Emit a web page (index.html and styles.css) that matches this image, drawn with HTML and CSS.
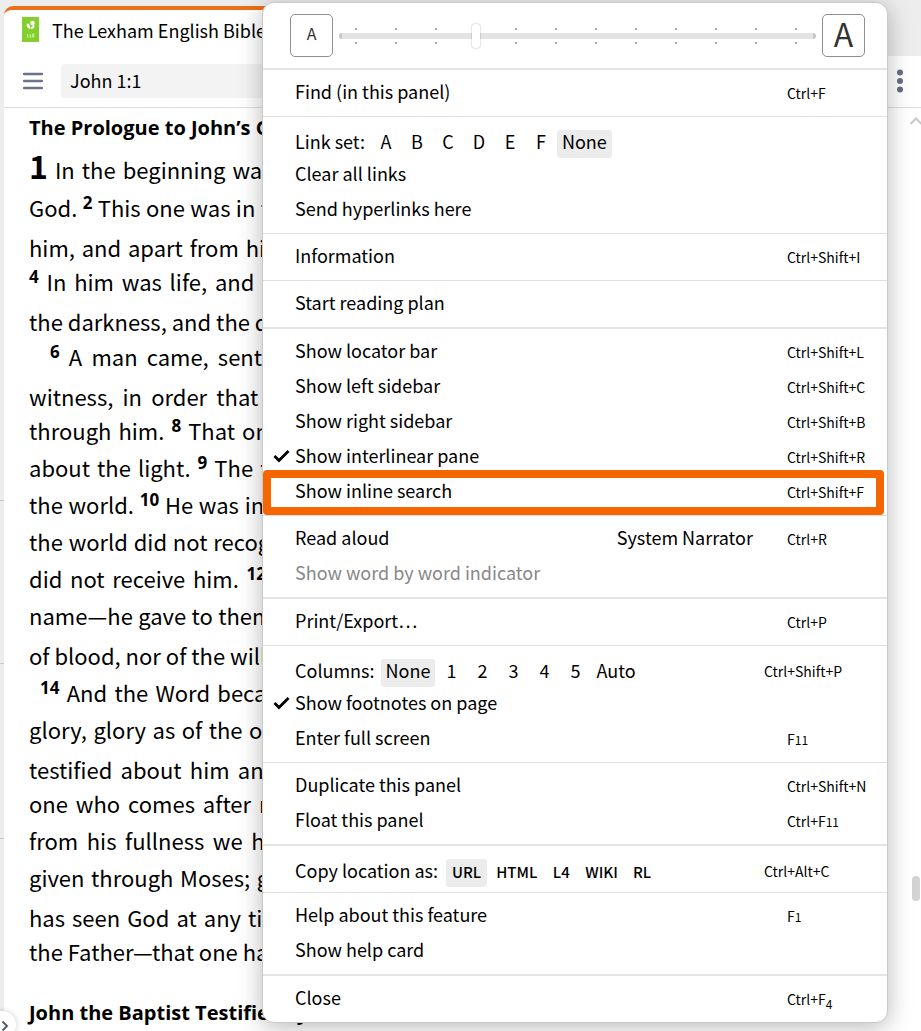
FILE: index.html
```html
<!DOCTYPE html>
<html lang="en">
<head>
    <meta charset="utf-8">
    <meta name="viewport" content="width=device-width, initial-scale=1">
    <title>The Lexham English Bible</title>
    <link rel="stylesheet" href="styles.css">
</head>
<body>
<div class="app">
    <div class="gutter">
        <span class="mark mark-1"></span>
        <span class="mark mark-2"></span>
        <span class="mark mark-3"></span>
        <button class="expand" type="button" aria-label="Expand">
            <svg width="8" height="12" viewBox="0 0 8 12"><path d="M1.5 1.5 6 6l-4.500 4.500" fill="none" stroke="#555c6b" stroke-width="2"/></svg>
        </button>
    </div>

    <main class="panel">
        <div class="tab">
            <svg width="17" height="25" viewBox="0 0 17 25">
                <rect width="17" height="25" fill="#84cf2c"/>
                <circle cx="10.500" cy="6" r="2.300" fill="#fff"/>
                <path d="M5 6.500c2 0 3.500 2 3.500 5.500C6 11.500 4 9.500 5 6.500zM9 12c0-2 1-3.500 3.500-4 .3 2.500-1 4-3.500 4z" fill="#fff"/>
                <path d="M5.500 17v3h1.500M8 17v3h1.500M8 18.500h1M10.500 17v3h1.500V17z" fill="none" stroke="#c9efa0"/>
            </svg>
            <span>The Lexham English Bible</span>
        </div>
        <div class="toolbar">
            <button class="icon-btn" type="button" aria-label="Panel list">
                <svg width="20" height="18" viewBox="0 0 20 18"><path d="M1 2h18M1 9h18M1 16h18" stroke="#6a7389" stroke-width="2.400" stroke-linecap="round"/></svg>
            </button>
            <input class="reference" type="text" value="John 1:1" aria-label="Reference">
            <button class="icon-btn" type="button" aria-label="Panel menu">
                <svg width="6" height="24" viewBox="0 0 6 24" fill="#666e84"><circle cx="3" cy="3.500" r="3"/><circle cx="3" cy="12" r="3"/><circle cx="3" cy="20.500" r="3"/></svg>
            </button>
        </div>

        <article class="text">
            <h2>The Prologue to John’s Gospel</h2>
            <div class="para">
                <p class="first"><b class="chapter">1</b> In the beginning was the Word, and the Word was with God, and the Word was</p>
                <p>God. <sup>2</sup> This one was in the beginning with God. <sup>3</sup> All things came into being through</p>
                <p class="low">him, and apart from him not one thing came into being that has come into being.</p>
                <p><sup>4</sup> In him was life, and the life was the light of humanity. <sup>5</sup> And the light shines in</p>
                <p class="low end">the darkness, and the darkness did not overcome it.</p>
            </div>
            <div class="para">
                <p class="indent"><sup>6</sup> A man came, sent from God, whose name was John. <sup>7</sup> This one came for a</p>
                <p class="low">witness, in order that he could testify about the light, so that all would believe</p>
                <p>through him. <sup>8</sup> That one was not the light, but came in order that he could testify</p>
                <p>about the light. <sup>9</sup> The true light, who gives light to every person, was coming into</p>
                <p>the world. <sup>10</sup> He was in the world, and the world came into being through him, and</p>
                <p>the world did not recognize him. <sup>11</sup> He came to his own things, and his own people</p>
                <p>did not receive him. <sup>12</sup> But as many as received him—to those who believe in his</p>
                <p>name—he gave to them authority to become children of God, <sup>13</sup> who were born not</p>
                <p class="low end">of blood, nor of the will of the flesh, nor of the will of a husband, but of God.</p>
            </div>
            <div class="para">
                <p class="indent-2"><sup>14</sup> And the Word became flesh and took up residence among us, and we saw his</p>
                <p>glory, glory as of the one and only from the Father, full of grace and truth. <sup>15</sup> John</p>
                <p class="low">testified about him and cried out, saying, “This is he about whom I said, ‘The</p>
                <p>one who comes after me is ahead of me, because he existed before me.’ <sup>16</sup> For</p>
                <p>from his fullness we have all received, and grace after grace. <sup>17</sup> For the law was</p>
                <p>given through Moses; grace and truth came about through Jesus Christ. <sup>18</sup> No one</p>
                <p class="low">has seen God at any time; the one and only, God, the one who is in the bosom of</p>
                <p class="end">the Father—that one has made him known.</p>
            </div>
            <h2 class="next">John the Baptist Testifies by</h2>
        </article>

        <div class="scrollbar">
            <svg width="14" height="8" viewBox="0 0 14 8"><path d="M1.500 7 7 1.500 12.500 7" fill="none" stroke="#c8c8c8" stroke-width="2"/></svg>
            <span class="thumb"></span>
        </div>
    </main>

    <div class="menu">
        <div class="size-row">
            <button class="size-btn" type="button" aria-label="Smaller text">A</button>
            <div class="slider">
                <input type="range" min="0" max="100" value="28" aria-label="Text size">
            </div>
            <button class="size-btn large" type="button" aria-label="Larger text">A</button>
        </div>
        <div class="group">
            <button class="item" type="button"><span>Find (in this panel)</span><kbd>Ctrl+F</kbd></button>
        </div>
        <div class="group">
            <div class="choices">
                <span class="label">Link set:</span>
                <button class="chip" type="button">A</button>
                <button class="chip" type="button">B</button>
                <button class="chip" type="button">C</button>
                <button class="chip" type="button">D</button>
                <button class="chip" type="button">E</button>
                <button class="chip" type="button">F</button>
                <button class="chip active" type="button">None</button>
            </div>
            <button class="item" type="button"><span>Clear all links</span></button>
            <button class="item" type="button"><span>Send hyperlinks here</span></button>
        </div>
        <div class="group">
            <button class="item" type="button"><span>Information</span><kbd>Ctrl+Shift+I</kbd></button>
        </div>
        <div class="group strong">
            <button class="item" type="button"><span>Start reading plan</span></button>
        </div>
        <div class="group">
            <button class="item" type="button"><span>Show locator bar</span><kbd>Ctrl+Shift+L</kbd></button>
            <button class="item" type="button"><span>Show left sidebar</span><kbd>Ctrl+Shift+C</kbd></button>
            <button class="item" type="button"><span>Show right sidebar</span><kbd>Ctrl+Shift+B</kbd></button>
            <button class="item" type="button">
                <svg class="check" width="17" height="14" viewBox="0 0 17 14"><path d="M1.500 7 6 11.500 15.500 2" fill="none" stroke="#000" stroke-width="2.800"/></svg>
                <span>Show interlinear pane</span><kbd>Ctrl+Shift+R</kbd>
            </button>
            <button class="item highlighted" type="button"><span>Show inline search</span><kbd>Ctrl+Shift+F</kbd></button>
        </div>
        <div class="group strong">
            <button class="item" type="button"><span>Read aloud</span><span class="voice">System Narrator</span><kbd>Ctrl+R</kbd></button>
            <button class="item" type="button" disabled><span>Show word by word indicator</span></button>
        </div>
        <div class="group">
            <button class="item" type="button"><span>Print/Export…</span><kbd>Ctrl+P</kbd></button>
        </div>
        <div class="group">
            <div class="choices">
                <span class="label">Columns:</span>
                <button class="chip active" type="button">None</button>
                <button class="chip" type="button">1</button>
                <button class="chip" type="button">2</button>
                <button class="chip" type="button">3</button>
                <button class="chip" type="button">4</button>
                <button class="chip" type="button">5</button>
                <button class="chip" type="button">Auto</button>
                <kbd>Ctrl+Shift+P</kbd>
            </div>
            <button class="item" type="button">
                <svg class="check" width="17" height="14" viewBox="0 0 17 14"><path d="M1.500 7 6 11.500 15.500 2" fill="none" stroke="#000" stroke-width="2.800"/></svg>
                <span>Show footnotes on page</span>
            </button>
            <button class="item" type="button"><span>Enter full screen</span><kbd>F<small>11</small></kbd></button>
        </div>
        <div class="group strong">
            <button class="item" type="button"><span>Duplicate this panel</span><kbd>Ctrl+Shift+N</kbd></button>
            <button class="item" type="button"><span>Float this panel</span><kbd>Ctrl+F<small>11</small></kbd></button>
        </div>
        <div class="group">
            <div class="choices formats">
                <span class="label">Copy location as:</span>
                <button class="chip active" type="button">URL</button>
                <button class="chip" type="button">HTML</button>
                <button class="chip" type="button">L4</button>
                <button class="chip" type="button">WIKI</button>
                <button class="chip" type="button">RL</button>
                <kbd>Ctrl+Alt+C</kbd>
            </div>
        </div>
        <div class="group strong">
            <button class="item" type="button"><span>Help about this feature</span><kbd>F<small>1</small></kbd></button>
            <button class="item" type="button"><span>Show help card</span></button>
        </div>
        <div class="group">
            <button class="item" type="button"><span>Close</span><kbd>Ctrl+F<small class="drop">4</small></kbd></button>
        </div>
    </div>
</div>
</body>
</html>
```
FILE: styles.css
```css
* {
    box-sizing: border-box;
}

body {
    margin: 0;
    background-color: #ededed;
    color: #000;
    font-family: "Noto Sans CJK SC", "Noto Sans", sans-serif;
    font-size: 18px;
}

button, input, kbd {
    font: inherit;
    color: inherit;
}

button {
    margin: 0;
    padding: 0;
    border: none;
    background: none;
    text-align: left;
}

.app {
    position: relative;
    display: flex;
    height: 100vh;
    padding-top: 6px;
    overflow: hidden;
}

/* left edge */
.gutter {
    flex: 0 0 4px;
}

.mark {
    position: absolute;
    left: 0;
    width: 4px;
    height: 1px;
    background: #c8c8c8;
}

.mark-1 { top: 500px; }
.mark-2 { top: 663px; }
.mark-3 { top: 838px; }

.expand {
    position: absolute;
    left: -12px;
    bottom: -8px;
    z-index: 1;
    width: 28px;
    height: 28px;
    padding: 1px 0 0 13px;
    border-radius: 50%;
    background: #fff;
    box-shadow: 0 0 6px rgba(0, 0, 0, 0.2);
    line-height: 0;
}

/* bible panel */
.panel {
    position: relative;
    flex: 1;
    min-width: 0;
    overflow: hidden;
}

.tab {
    display: flex;
    align-items: center;
    gap: 13px;
    width: 60%;
    height: 50px;
    padding: 0 18px 7px;
    border-top: 4px solid #ec7019;
    border-radius: 9px 9px 0 0;
    background: #fff;
}

.toolbar {
    display: flex;
    align-items: center;
    justify-content: space-between;
    height: 52px;
    padding: 0 18px 1px 19px;
    border-bottom: 1px solid #ddd;
    background: #fff;
}

.icon-btn {
    line-height: 0;
}

.reference {
    flex: 1;
    min-width: 0;
    height: 34px;
    margin: 0 200px 0 18px;
    padding: 0 9px 2px;
    border: none;
    border-radius: 4px;
    background: #f3f3f3;
}

.text {
    height: 100%;
    padding: 3px 40px 0 25px;
    background: #fff;
}

.text h2 {
    margin: 0 0 6px;
    font-family: "Open Sans", sans-serif;
    font-size: 20px;
    line-height: 34px;
    white-space: nowrap;
}

.text p {
    height: 37px;
    margin: 0;
    font-size: 22px;
    line-height: 37px;
    text-align-last: justify;
    white-space: nowrap;
}

.text .first {
    height: 38px;
}

.para + .para {
    padding-top: 1px;
}

.para:nth-of-type(3) {
    padding-top: 3px;
}

.text .low {
    padding-top: 3px;
}

.text .end {
    text-align-last: left;
}

.text .indent {
    padding-left: 21px;
}

.text .indent-2 {
    padding-left: 11px;
}

.text .next {
    margin-top: 26px;
}

.chapter {
    font-size: 32px;
    line-height: 0;
}

sup {
    font-family: "Open Sans", sans-serif;
    font-size: 17px;
    font-weight: bold;
    line-height: 0;
}

.scrollbar {
    position: absolute;
    top: 111px;
    right: -2px;
    bottom: 0;
    width: 14px;
}

.scrollbar svg {
    display: block;
}

.thumb {
    position: absolute;
    top: 83%;
    left: 3px;
    width: 8px;
    height: 25px;
    border-radius: 4px;
    background: #d3d3d3;
}

/* panel menu */
.menu {
    position: absolute;
    top: 2px;
    left: 262px;
    right: 33px;
    border: 1px solid #c9c9c9;
    border-radius: 12px;
    background: #fff;
    box-shadow: 0 4px 24px rgba(0, 0, 0, 0.28);
}

.size-row {
    display: flex;
    align-items: center;
    gap: 6px;
    padding: 11px 22px 11px 27px;
    border-bottom: 2px solid #e4e4e4;
}

.size-btn {
    width: 43px;
    height: 43px;
    padding-bottom: 5px;
    border: 1px solid #8f8f8f;
    border-radius: 5px;
    color: #333;
    font-size: 16px;
    line-height: 1;
    text-align: center;
}

.size-btn.large {
    font-size: 32px;
}

.slider {
    display: flex;
    flex: 1;
    align-items: center;
    height: 24px;
    background:
        linear-gradient(90deg, #aaa 2px, transparent 2px) 16px 4px / 40px 2px repeat-x,
        linear-gradient(90deg, #aaa 2px, transparent 2px) 16px 18px / 40px 2px repeat-x;
}

.slider input {
    appearance: none;
    width: 100%;
    height: 6px;
    margin: 0;
    border: solid #c6c6c6;
    border-width: 0 3px;
    border-radius: 3px;
    background: #e4e4e4;
}

.slider input::-webkit-slider-thumb {
    appearance: none;
    width: 8px;
    height: 24px;
    border-radius: 3px;
    background: #fff;
    box-shadow: 0 0 2px rgba(0, 0, 0, 0.35);
}

.group {
    padding: 6px 0 5px;
    border-bottom: 1px solid #e0e0e0;
}

.group.strong {
    border-bottom: 2px solid #e4e4e4;
}

.group:last-child {
    border-bottom: none;
}

.item {
    position: relative;
    display: flex;
    align-items: baseline;
    width: 100%;
    height: 35px;
    padding-left: 32px;
    line-height: 30px;
}

.item:disabled {
    color: #888;
}

.item kbd {
    width: 100px;
    margin-left: auto;
}

kbd {
    font-size: 14px;
}

kbd small {
    font-size: 12px;
    line-height: 1;
}

kbd .drop {
    vertical-align: sub;
}

.voice {
    margin-left: auto;
    margin-right: 34px;
}

.voice + kbd {
    margin-left: 0;
}

.check {
    position: absolute;
    top: 9px;
    left: 10px;
}

.highlighted::after {
    content: "";
    position: absolute;
    inset: -5px 3px -5px 0;
    border: 8px solid #f56600;
    border-radius: 4px;
}

.choices {
    display: flex;
    align-items: flex-end;
    gap: 1px;
    height: 35px;
    padding-left: 32px;
    line-height: 23px;
}

.choices .label {
    margin-right: 5px;
    padding-bottom: 5px;
}

.chip {
    min-width: 30px;
    height: 28px;
    padding: 0 5px 5px;
    border-radius: 3px;
    text-align: center;
}

.chip.active {
    background: #ececec;
}

.choices.formats {
    gap: 3px;
}

.formats .chip {
    padding: 0 6px 3px;
    font-size: 15px;
    font-weight: 500;
}

.choices kbd {
    width: 123px;
    margin-left: auto;
    padding-bottom: 4px;
}
```
